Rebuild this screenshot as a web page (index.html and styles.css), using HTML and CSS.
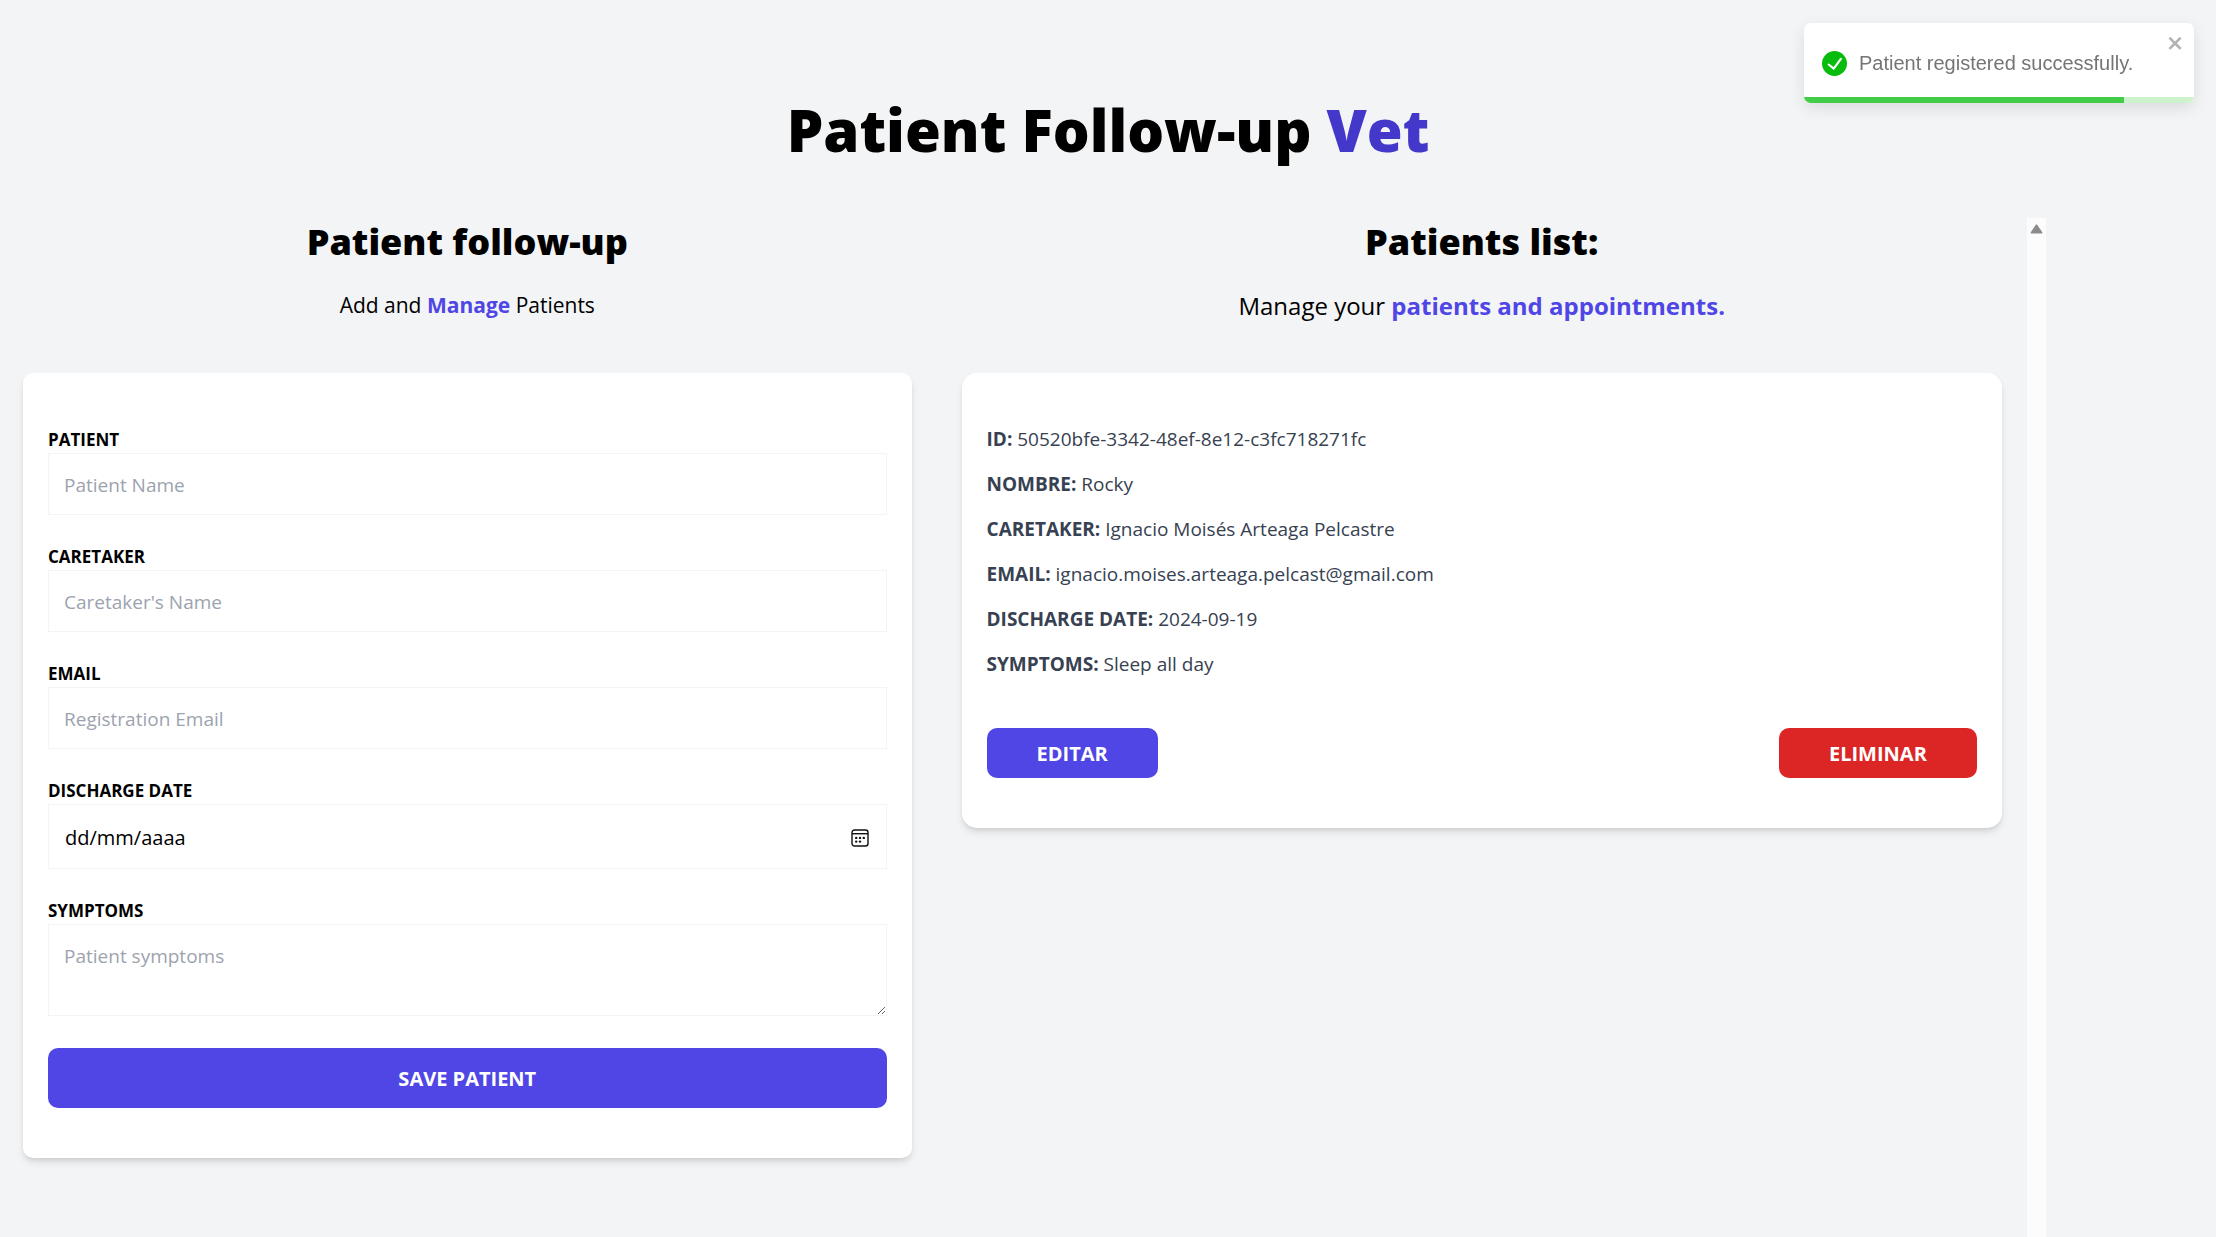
FILE: index.html
```html
<!DOCTYPE html>
<html lang="en">
<head>
  <meta charset="utf-8">
  <meta name="viewport" content="width=device-width, initial-scale=1">
  <title>Patient Follow-up Vet</title>
  <link rel="stylesheet" href="styles.css">
</head>
<body>
  <div class="page">
    <h1 class="title">Patient Follow-up <span class="title-accent">Vet</span></h1>

    <main class="columns">
      <section class="form-column">
        <h2 class="heading">Patient follow-up</h2>
        <p class="lead">Add and <strong class="accent">Manage</strong> Patients</p>

        <form class="card form">
          <div class="field">
            <label class="label" for="patient">Patient</label>
            <input class="input" id="patient" type="text" placeholder="Patient Name">
          </div>
          <div class="field">
            <label class="label" for="caretaker">Caretaker</label>
            <input class="input" id="caretaker" type="text" placeholder="Caretaker's Name">
          </div>
          <div class="field">
            <label class="label" for="email">Email</label>
            <input class="input" id="email" type="email" placeholder="Registration Email">
          </div>
          <div class="field">
            <label class="label" for="date">Discharge date</label>
            <div class="date-box">
              <input class="date-input" id="date" type="text" placeholder="dd/mm/aaaa">
              <button class="icon-button" type="button" aria-label="Open calendar">
                <svg width="18" height="18" viewBox="0 0 18 18" fill="none">
                  <rect x="1" y="1" width="16" height="16" rx="2.5" stroke="#111" stroke-width="1.4"/>
                  <path d="M1 4.7h16" stroke="#111" stroke-width="1.4"/>
                  <g fill="#111">
                    <circle cx="5.2" cy="8.9" r="1.2"/><circle cx="9" cy="8.9" r="1.2"/><circle cx="12.8" cy="8.9" r="1.2"/>
                    <circle cx="5.2" cy="12.6" r="1.2"/><circle cx="9" cy="12.6" r="1.2"/>
                  </g>
                </svg>
              </button>
            </div>
          </div>
          <div class="field">
            <label class="label" for="symptoms">Symptoms</label>
            <textarea class="input textarea" id="symptoms" rows="2" placeholder="Patient symptoms"></textarea>
          </div>
          <button class="button button-save" type="submit">Save patient</button>
        </form>
      </section>

      <section class="list-column">
        <div class="list">
          <h2 class="heading">Patients list:</h2>
          <p class="lead lead-large">Manage your <strong class="accent">patients and appointments.</strong></p>

          <article class="card patient">
            <p class="detail"><strong class="detail-name">ID:</strong> 50520bfe-3342-48ef-8e12-c3fc718271fc</p>
            <p class="detail"><strong class="detail-name">Nombre:</strong> Rocky</p>
            <p class="detail"><strong class="detail-name">Caretaker:</strong> Ignacio Moisés Arteaga Pelcastre</p>
            <p class="detail"><strong class="detail-name">Email:</strong> ignacio.moises.arteaga.pelcast@gmail.com</p>
            <p class="detail"><strong class="detail-name">Discharge date:</strong> 2024-09-19</p>
            <p class="detail"><strong class="detail-name">Symptoms:</strong> Sleep all day</p>
            <div class="actions">
              <button class="button" type="button">Editar</button>
              <button class="button button-danger" type="button">Eliminar</button>
            </div>
          </article>
        </div>
        <div class="scrollbar" aria-hidden="true">
          <svg width="13" height="10" viewBox="0 0 13 10"><path d="M6.5 1.2 11.6 8.8H1.4Z" fill="#8b8b8b" stroke="#8b8b8b" stroke-width="1.6" stroke-linejoin="round"/></svg>
        </div>
      </section>
    </main>
  </div>

  <div class="toast" role="alert">
    <svg class="toast-icon" viewBox="0 0 24 24" fill="#07bc0c"><path d="M12 0a12 12 0 1012 12A12.014 12.014 0 0012 0zm6.927 8.2l-6.845 9.289a1.011 1.011 0 01-1.43.188l-4.888-3.908a1 1 0 111.25-1.562l4.076 3.261 6.227-8.451a1 1 0 111.61 1.183z"/></svg>
    <p class="toast-text">Patient registered successfully.</p>
    <button class="toast-close" type="button" aria-label="close">
      <svg width="18" height="20" viewBox="0 0 14 16" fill="#b3b3b3"><path fill-rule="evenodd" d="M7.71 8.23l3.75 3.75-1.48 1.48-3.75-3.75-3.75 3.75L1 11.98l3.75-3.75L1 4.48 2.48 3l3.75 3.75L9.98 3l1.48 1.48-3.75 3.75z"/></svg>
    </button>
    <div class="toast-track"><div class="toast-bar" style="width: 82%"></div></div>
  </div>
</body>
</html>
```
FILE: styles.css
```css
*,
*::before,
*::after {
  box-sizing: border-box;
}

body {
  margin: 0;
  background: #f3f4f6;
  color: #000;
  font-family: "Segoe UI", "Open Sans", "Noto Sans", sans-serif;
  font-size: 19px;
  line-height: 30px;
}

h1,
h2,
p {
  margin: 0;
}

button,
input,
textarea {
  font: inherit;
  color: inherit;
}

.page {
  display: flex;
  flex-direction: column;
  min-height: 100vh;
  padding-top: 100px;
}

.title {
  font-size: 58px;
  line-height: 60px;
  font-weight: 800;
  text-align: center;
}

.title-accent {
  color: #4338ca;
}

.columns {
  flex: 1;
  display: grid;
  grid-template-columns: 47fr 60fr 9fr;
  margin-top: 58px;
  padding-left: 23px;
}

.form-column {
  padding-bottom: 50px;
}

.heading {
  padding-top: 3px;
  font-size: 36px;
  line-height: 42px;
  font-weight: 800;
  text-align: center;
}

.lead {
  margin: 25px 0 50px;
  font-size: 21px;
  line-height: 35px;
  text-align: center;
}

.lead-large {
  font-size: 24px;
}

.accent {
  color: #4f46e5;
  font-weight: 700;
}

.card {
  padding: 50px 25px;
  background: #fff;
  border-radius: 10px;
  box-shadow: 0 5px 8px -1px rgba(0, 0, 0, 0.1), 0 3px 5px -2px rgba(0, 0, 0, 0.1);
}

.field {
  margin-bottom: 25px;
}

.label {
  display: block;
  padding-top: 4px;
  font-size: 17px;
  line-height: 26px;
  font-weight: 700;
  text-transform: uppercase;
}

.input,
.date-box {
  display: block;
  width: 100%;
  padding: 16px 15px 14px;
  border: 1px solid #f3f4f6;
  background: #fff;
}

.input::placeholder {
  color: #9ca3af;
  opacity: 1;
}

.date-box {
  display: flex;
  align-items: center;
  height: 65px;
}

.date-input {
  flex: 1;
  min-width: 0;
  padding: 0 1px;
  border: 0;
  background: none;
  font-size: 20px;
}

.date-input::placeholder {
  color: #000;
  opacity: 1;
}

.icon-button {
  display: flex;
  padding: 0 2px;
  border: 0;
  background: none;
}

.textarea {
  margin-bottom: 32px;
  resize: vertical;
}

.button {
  padding: 11px 50px 9px;
  border: 0;
  border-radius: 10px;
  background: #4f46e5;
  color: #fff;
  font-size: 20px;
  font-weight: 700;
  text-transform: uppercase;
}

.button-save {
  display: block;
  width: 100%;
  padding: 16px 15px 14px;
}

.button-danger {
  background: #dc2626;
}

.list-column {
  display: flex;
  padding-left: 25px;
}

.list {
  flex: 1;
  padding: 0 25px;
}

.patient {
  padding-top: 51px;
  border-radius: 15px;
  color: #374151;
}

.detail {
  margin-bottom: 15px;
}

.detail-name {
  font-weight: 700;
  text-transform: uppercase;
}

.actions {
  display: flex;
  justify-content: space-between;
  margin-top: 49px;
}

.scrollbar {
  width: 19px;
  padding-top: 6px;
  background: #fcfcfc;
  line-height: 0;
  text-align: center;
}

.toast {
  position: fixed;
  top: 23px;
  right: 22px;
  display: flex;
  align-items: center;
  width: 390px;
  height: 80px;
  padding: 0 18px;
  overflow: hidden;
  border-radius: 7px;
  background: #fff;
  box-shadow: 0 5px 15px rgba(0, 0, 0, 0.1);
  color: #757575;
  font-family: Arial, "Liberation Sans", sans-serif;
  font-size: 20px;
}

.toast-icon {
  width: 25px;
  margin-right: 12px;
}

.toast-close {
  position: absolute;
  top: 10px;
  right: 9px;
  display: flex;
  padding: 0;
  border: 0;
  background: none;
}

.toast-track {
  position: absolute;
  left: 0;
  right: 0;
  bottom: 0;
  height: 6px;
  background: #cdf2ce;
}

.toast-bar {
  height: 100%;
  background: #42cd48;
}
```
